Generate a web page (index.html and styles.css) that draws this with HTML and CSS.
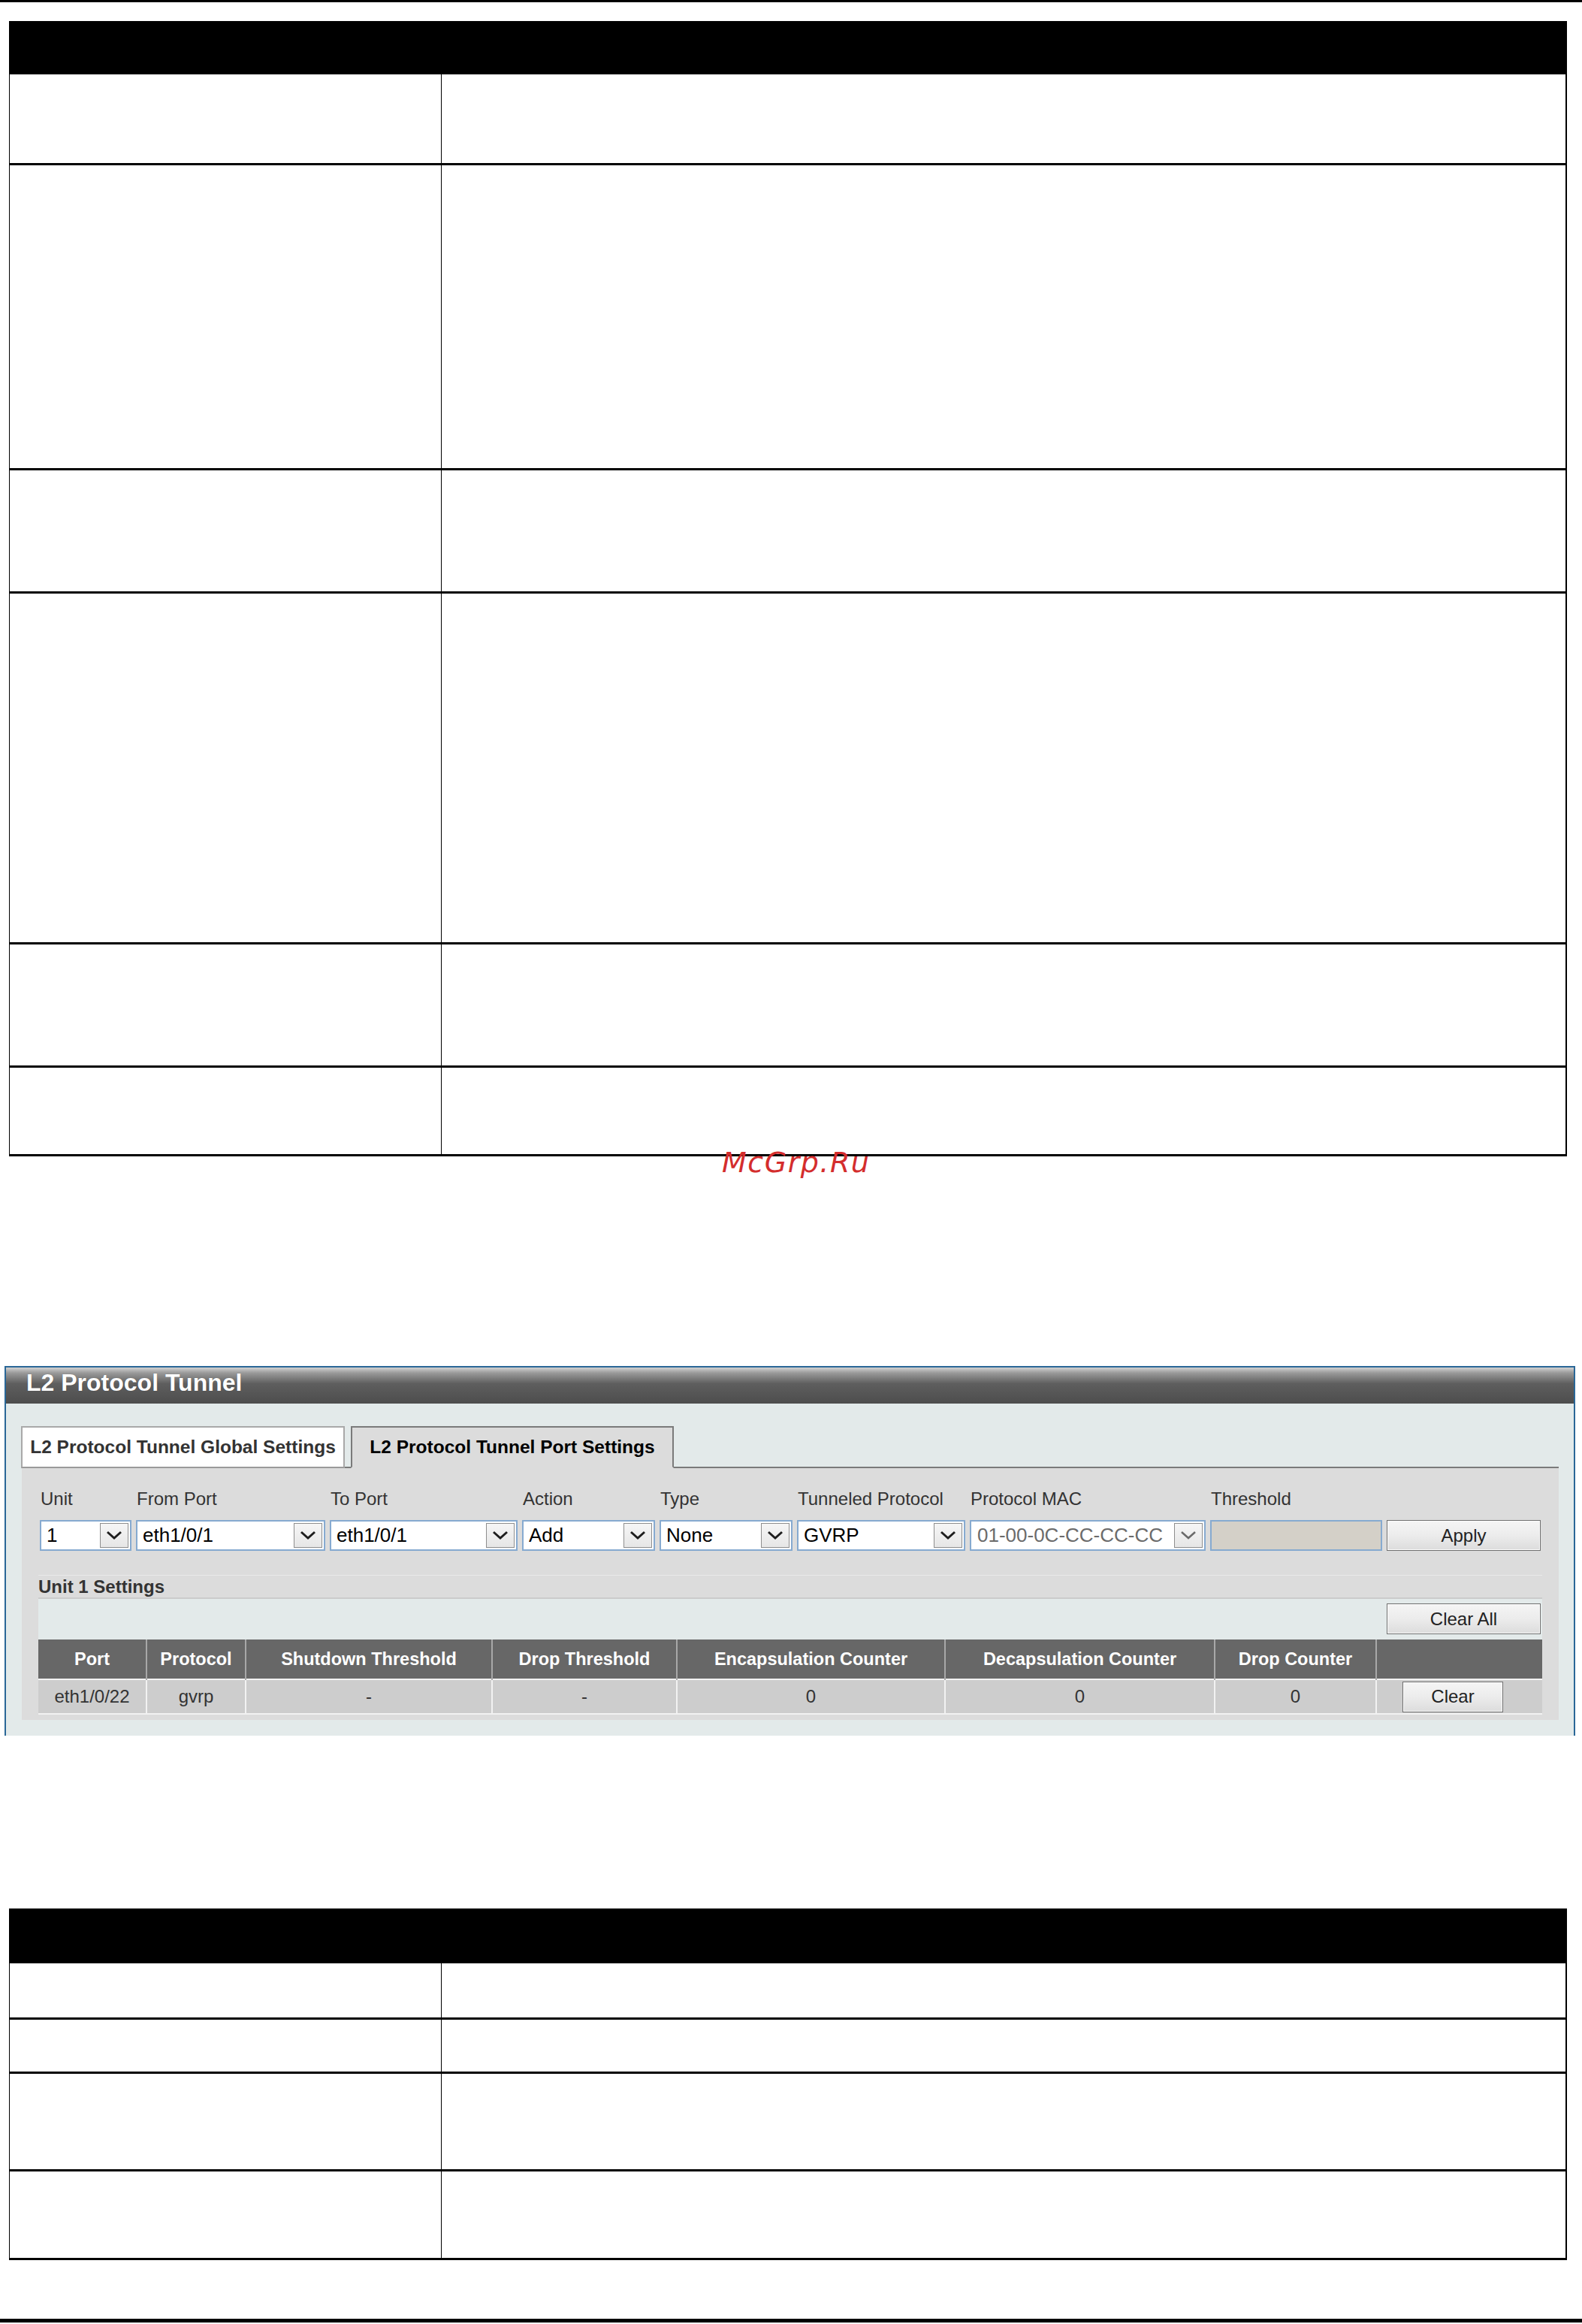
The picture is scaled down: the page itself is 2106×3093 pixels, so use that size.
FILE: index.html
```html
<!DOCTYPE html>
<html>
<head>
<meta charset="utf-8">
<title>L2 Protocol Tunnel</title>
<link rel="stylesheet" href="styles.css">
</head>
<body>
<div class="band band-top"></div>

<div class="doc-table t1">
  <div class="dt-head h71"></div>
  <div class="dt-row h121"><div class="c1"></div><div class="c2"></div></div>
  <div class="dt-row h406"><div class="c1"></div><div class="c2"></div></div>
  <div class="dt-row h164"><div class="c1"></div><div class="c2"></div></div>
  <div class="dt-row h467"><div class="c1"></div><div class="c2"></div></div>
  <div class="dt-row h164"><div class="c1"></div><div class="c2"></div></div>
  <div class="dt-row h118"><div class="c1"></div><div class="c2"></div></div>
</div>

<div class="watermark">McGrp.Ru</div>

<section class="panel">
  <div class="panel-title">L2 Protocol Tunnel</div>
  <div class="tabs">
    <div class="tab">L2 Protocol Tunnel Global Settings</div>
    <div class="tab active">L2 Protocol Tunnel Port Settings</div>
  </div>
  <div class="tab-body">
    <div class="form-row">
      <div class="field w-unit">
        <div class="label">Unit</div>
        <div class="select"><span class="val">1</span><span class="arrow"><svg viewBox="0 0 36 31" width="36" height="31"><path d="M9 11 L18 19 L27 11" fill="none" stroke="#1e1e1e" stroke-width="3"/></svg></span></div>
      </div>
      <div class="field w-from">
        <div class="label">From Port</div>
        <div class="select"><span class="val">eth1/0/1</span><span class="arrow"><svg viewBox="0 0 36 31" width="36" height="31"><path d="M9 11 L18 19 L27 11" fill="none" stroke="#1e1e1e" stroke-width="3"/></svg></span></div>
      </div>
      <div class="field w-to">
        <div class="label">To Port</div>
        <div class="select"><span class="val">eth1/0/1</span><span class="arrow"><svg viewBox="0 0 36 31" width="36" height="31"><path d="M9 11 L18 19 L27 11" fill="none" stroke="#1e1e1e" stroke-width="3"/></svg></span></div>
      </div>
      <div class="field w-action">
        <div class="label">Action</div>
        <div class="select"><span class="val">Add</span><span class="arrow"><svg viewBox="0 0 36 31" width="36" height="31"><path d="M9 11 L18 19 L27 11" fill="none" stroke="#1e1e1e" stroke-width="3"/></svg></span></div>
      </div>
      <div class="field w-type">
        <div class="label">Type</div>
        <div class="select"><span class="val">None</span><span class="arrow"><svg viewBox="0 0 36 31" width="36" height="31"><path d="M9 11 L18 19 L27 11" fill="none" stroke="#1e1e1e" stroke-width="3"/></svg></span></div>
      </div>
      <div class="field w-proto">
        <div class="label">Tunneled Protocol</div>
        <div class="select"><span class="val">GVRP</span><span class="arrow"><svg viewBox="0 0 36 31" width="36" height="31"><path d="M9 11 L18 19 L27 11" fill="none" stroke="#1e1e1e" stroke-width="3"/></svg></span></div>
      </div>
      <div class="field w-mac">
        <div class="label">Protocol MAC</div>
        <div class="select disabled"><span class="val">01-00-0C-CC-CC-CC</span><span class="arrow"><svg viewBox="0 0 36 31" width="36" height="31"><path d="M9 11 L18 19 L27 11" fill="none" stroke="#6a6a6a" stroke-width="2.5"/></svg></span></div>
      </div>
      <div class="field w-thr">
        <div class="label">Threshold</div>
        <div class="input disabled"></div>
      </div>
      <div class="field w-apply">
        <div class="label">&nbsp;</div>
        <button class="btn btn-wide">Apply</button>
      </div>
    </div>

    <div class="unit-bar">Unit 1 Settings</div>
    <div class="action-bar"><button class="btn btn-wide">Clear All</button></div>

    <table class="data">
      <colgroup>
        <col class="col-port"><col class="col-proto"><col class="col-shut"><col class="col-dropt">
        <col class="col-enc"><col class="col-dec"><col class="col-dropc"><col class="col-act">
      </colgroup>
      <thead>
        <tr>
          <th>Port</th><th>Protocol</th><th>Shutdown Threshold</th><th>Drop Threshold</th>
          <th>Encapsulation Counter</th><th>Decapsulation Counter</th><th>Drop Counter</th><th></th>
        </tr>
      </thead>
      <tbody>
        <tr>
          <td>eth1/0/22</td><td>gvrp</td><td>-</td><td>-</td>
          <td>0</td><td>0</td><td>0</td><td><button class="btn btn-small">Clear</button></td>
        </tr>
      </tbody>
    </table>
  </div>
</section>

<div class="doc-table t2">
  <div class="dt-head h73"></div>
  <div class="dt-row h75"><div class="c1"></div><div class="c2"></div></div>
  <div class="dt-row h72"><div class="c1"></div><div class="c2"></div></div>
  <div class="dt-row h130"><div class="c1"></div><div class="c2"></div></div>
  <div class="dt-row h118"><div class="c1"></div><div class="c2"></div></div>
</div>

<div class="band band-bottom"></div>
</body>
</html>
```

FILE: styles.css
```css
html, body {
  margin: 0;
  padding: 0;
  background: #ffffff;
}

body {
  position: relative;
  width: 2106px;
  height: 3093px;
  overflow: hidden;
  font-family: "Liberation Sans", Arial, sans-serif;
  color: #333;
}

.band {
  background: #000;
  width: 2106px;
}
.band-top { height: 3px; }
.band-bottom { height: 5px; margin-top: 78px; }

/* document tables (empty black-bordered tables) */
.doc-table {
  margin-left: 12px;
  width: 2074px;
  box-sizing: border-box;
  border-left: 1px solid #000;
  border-right: 2px solid #000;
}
.t1 { margin-top: 25px; }
.t2 { margin-top: 230px; }

.dt-head {
  background: #000;
  margin-left: -1px;
  margin-right: -2px;
}
.dt-row {
  display: grid;
  grid-template-columns: 575px 1fr;
  box-sizing: border-box;
  border-bottom: 3px solid #000;
}
.dt-row .c1 { border-right: 1px solid #000; }

.h71 { height: 71px; }
.h73 { height: 73px; }
.h72 { height: 72px; }
.h75 { height: 75px; }
.h118 { height: 118px; }
.h121 { height: 121px; }
.h130 { height: 130px; }
.h164 { height: 164px; }
.h406 { height: 406px; }
.h467 { height: 467px; }

/* watermark overlay */
.watermark {
  position: absolute;
  left: 961px;
  top: 1528px;
  font-family: "DejaVu Sans", sans-serif;
  font-style: italic;
  font-size: 38px;
  line-height: 1;
  letter-spacing: 1.5px;
  color: #d42d2d;
}

/* UI panel */
.panel {
  margin-top: 279px;
  margin-left: 6px;
  width: 2091px;
  box-sizing: border-box;
  border: 2px solid #2a6797;
  border-bottom: none;
  background: #e3eaea;
  padding-bottom: 21px;
}

.panel-title {
  height: 48px;
  box-sizing: border-box;
  padding-left: 27px;
  background: linear-gradient(to bottom, #d2d2d2 0%, #9a9a9a 15%, #5e5e5e 45%, #4d4d4d 100%);
  color: #fff;
  font-weight: bold;
  font-size: 32px;
  line-height: 40px;
  text-shadow: 0 0 1px rgba(0,0,0,0.3);
}

.tabs {
  display: flex;
  gap: 8px;
  padding-left: 20px;
  margin-top: 30px;
  margin-bottom: -2px;
  position: relative;
  z-index: 1;
}
.tab {
  height: 56px;
  box-sizing: border-box;
  width: 431px;
  background: #fff;
  border: 2px solid #a9a9a9;
  border-bottom-color: #9a9a9a;
  font-weight: bold;
  font-size: 24.5px;
  color: #333;
  display: flex;
  align-items: center;
  justify-content: center;
}
.tab.active {
  width: 430px;
  background: #dcdcdc;
  border-color: #7a7a7a;
  border-bottom-color: #dcdcdc;
  color: #000;
}

.tab-body {
  margin: 0 20px 0 21px;
  border-top: 2px solid #7a7a7a;
  background: #dcdcdc;
  padding: 27px 22px 7px 22px;
}

.form-row {
  display: flex;
  gap: 6px;
  margin-left: 2px;
}
.field {
  display: flex;
  flex-direction: column;
}
.label {
  height: 28px;
  line-height: 28px;
  font-size: 24px;
  color: #333;
  margin-bottom: 14px;
  padding-left: 1px;
  white-space: nowrap;
}
.w-unit { width: 122px; }
.w-from { width: 252px; }
.w-to { width: 250px; }
.w-action { width: 177px; }
.w-type { width: 177px; }
.w-proto { width: 224px; }
.w-mac { width: 314px; }
.w-thr { width: 229px; }
.w-apply { width: 205px; }

.select {
  height: 41px;
  box-sizing: border-box;
  border: 2px solid #86aad0;
  background: #fff;
  display: flex;
  align-items: center;
  padding: 0 2px 0 7px;
}
.select .val {
  flex: 1;
  font-size: 26px;
  color: #000;
  white-space: nowrap;
  overflow: hidden;
}
.select.disabled .val {
  color: #6b6b6b;
  padding-left: 1px;
}
.arrow {
  width: 38px;
  height: 33px;
  box-sizing: border-box;
  border: 1px solid #8e8e8e;
  background: linear-gradient(to bottom, #f6f6f6, #e6e6e6);
  display: flex;
  align-items: center;
  justify-content: center;
}
.arrow svg { display: block; }

.input {
  height: 41px;
  box-sizing: border-box;
  border: 2px solid #86aad0;
  background: #d4d0c8;
}

.btn {
  height: 41px;
  box-sizing: border-box;
  border: 1px solid #707070;
  background: linear-gradient(to bottom, #f5f5f5 0%, #ececec 50%, #dcdcdc 100%);
  box-shadow: inset 0 0 0 1px #fbfbfb;
  font-family: "Liberation Sans", Arial, sans-serif;
  font-size: 24px;
  color: #222;
  padding: 0;
  margin: 0;
}
.btn-wide { width: 205px; }
.btn-small { width: 134px; }

.unit-bar {
  margin-top: 32px;
  height: 32px;
  box-sizing: border-box;
  background: #dcdcdc;
  border-top: 1px solid #e9e9e9;
  border-bottom: 2px solid #cbcbcb;
  font-weight: bold;
  font-size: 24px;
  line-height: 29px;
  color: #333;
}

.action-bar {
  height: 54px;
  box-sizing: border-box;
  background: #e3eaea;
  display: flex;
  justify-content: flex-end;
  align-items: flex-start;
  padding: 6px 2px 0 0;
}

.data {
  width: 2002px;
  table-layout: fixed;
  border-collapse: collapse;
}
.col-port { width: 144px; }
.col-proto { width: 132px; }
.col-shut { width: 328px; }
.col-dropt { width: 246px; }
.col-enc { width: 357px; }
.col-dec { width: 359px; }
.col-dropc { width: 215px; }
.col-act { width: 221px; }

.data th {
  height: 52px;
  padding: 0;
  background: #676767;
  color: #fff;
  font-weight: bold;
  font-size: 23.5px;
  text-align: center;
  border-left: 2px solid #a8a8a8;
  white-space: nowrap;
}
.data th:first-child { border-left: none; }
.data td {
  height: 44px;
  padding: 0;
  background: #cdcdcd;
  color: #333;
  font-size: 24px;
  text-align: center;
  border-left: 2px solid #f2f2f2;
  border-top: 2px solid #f2f2f2;
  border-bottom: 2px solid #f2f2f2;
}
.data td:first-child { border-left: none; }
.data td .btn { display: block; margin: 0 auto 0 34px; }
```
